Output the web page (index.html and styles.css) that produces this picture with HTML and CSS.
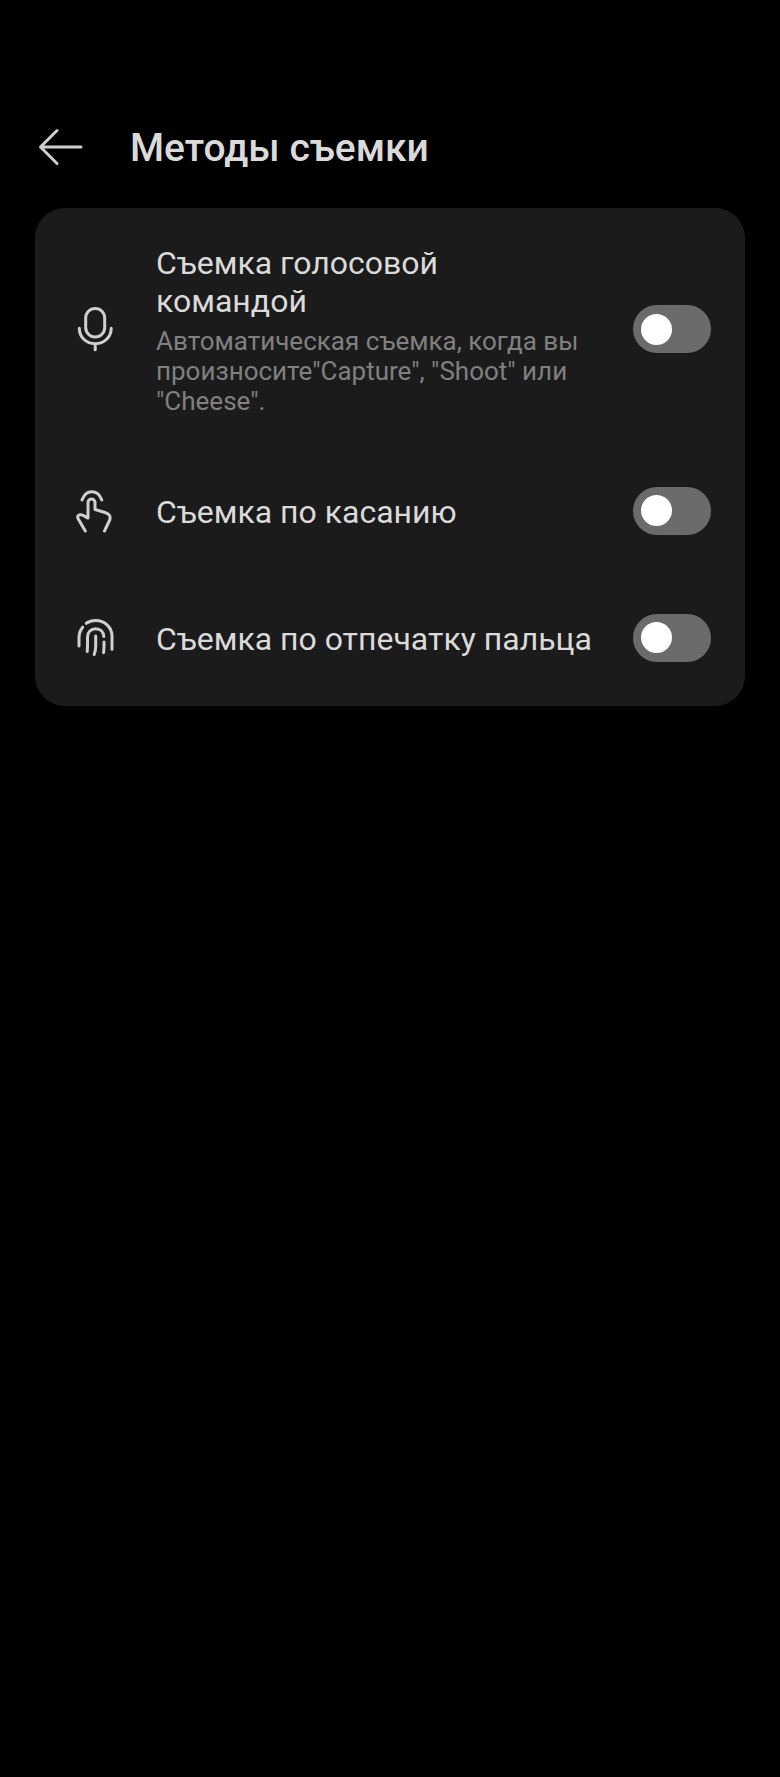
FILE: index.html
```
<!DOCTYPE html>
<html lang="ru">
<head>
    <meta charset="UTF-8">
    <meta name="viewport" content="width=device-width, initial-scale=1.0">
    <title>Методы съемки</title>
    <link rel="stylesheet" href="styles.css">
</head>
<body>
    <header class="header">
        <button type="button" class="back-btn" aria-label="Назад">
            <svg class="back-icon" viewBox="0 0 48 48" aria-hidden="true">
                <path d="M22 7.500L5.500 24l16.500 16.500M5.500 24H46"/>
            </svg>
        </button>
        <h1>Методы съемки</h1>
    </header>

    <main class="card">
        <div class="row">
            <svg class="row-icon" viewBox="0 0 40 48" aria-hidden="true">
                <rect x="9.700" y="3.500" width="19" height="28.500" rx="9.500"/>
                <path d="M3.300 23.200C3.300 32 10 38.700 19.200 38.700S35.200 32 35.200 23.200M19.200 38.700v6"/>
            </svg>
            <label class="row-text" for="voice">
                <span class="row-title">Съемка голосовой командой</span>
                <span class="row-desc">Автоматическая съемка, когда вы произносите"Capture", "Shoot" или "Cheese".</span>
            </label>
            <input type="checkbox" role="switch" class="switch" id="voice">
        </div>

        <div class="row">
            <svg class="row-icon" viewBox="0 0 40 48" aria-hidden="true">
                <path d="M6 13C8 7.500 11.500 4.700 15.800 4.700S23.800 7.500 25.800 13"/>
                <path d="M9.300 44L2.300 32C.700 29.300 2.500 27.300 5 27.800C8 28.300 9.500 30 12 31V15.500a3.500 3.500 0 0 1 7 0V22.500L29 25.500C33.500 27 35 29 33.700 33L28.500 44"/>
            </svg>
            <label class="row-text" for="touch">
                <span class="row-title">Съемка по касанию</span>
            </label>
            <input type="checkbox" role="switch" class="switch" id="touch">
        </div>

        <div class="row">
            <svg class="row-icon" viewBox="0 0 40 48" aria-hidden="true">
                <path d="M3 32V24C3 19.500 4.300 16 6.700 13.200"/>
                <path d="M10.300 9.300C13 7.300 16 6.500 19.500 6.500C29 6.500 36 13.500 36 22V35.300"/>
                <path d="M11.200 37.500C11.800 32 11.500 28 11.500 23C11.500 18 15 14.700 19.700 14.700S27.500 18 27.800 22.500"/>
                <path d="M28 28C28.200 32 28 35 27.600 38.700"/>
                <path d="M19.700 22V32C19.700 35 19.200 38 18.200 40.500"/>
            </svg>
            <label class="row-text" for="fingerprint">
                <span class="row-title">Съемка по отпечатку пальца</span>
            </label>
            <input type="checkbox" role="switch" class="switch" id="fingerprint">
        </div>
    </main>
</body>
</html>
```
FILE: styles.css
```
* {
    box-sizing: border-box;
    margin: 0;
    padding: 0;
}

body {
    font-family: Roboto, "Noto Sans", sans-serif;
    background: #000;
    color: #dadada;
    min-height: 100vh;
    padding: 123px 35px 35px;
}

.header {
    display: flex;
    align-items: center;
    gap: 47px;
    margin-bottom: 37px;
}

.header h1 {
    padding-top: 2px;
    font-size: 39px;
    font-weight: 500;
    line-height: 46px;
}

.back-btn {
    width: 48px;
    height: 48px;
    background: none;
    border: none;
    cursor: pointer;
}

.back-icon,
.row-icon {
    display: block;
    flex-shrink: 0;
    fill: none;
    stroke: #cfcfcf;
    stroke-width: 3;
    stroke-linecap: round;
    stroke-linejoin: round;
}

.back-icon {
    width: 48px;
    height: 48px;
}

.row-icon {
    width: 40px;
    height: 48px;
}

.card {
    background: #1b1b1b;
    border-radius: 30px;
    padding: 3px 0 5px;
}

.row {
    display: flex;
    align-items: center;
    min-height: 127px;
    padding: 31px 34px 31px 41px;
}

.row-text {
    flex: 1;
    margin: 0 38px 0 40px;
    padding-top: 2px;
    cursor: pointer;
}

.row-title {
    display: block;
    font-size: 32px;
    line-height: 38px;
}

.row-desc {
    display: block;
    margin-top: 6px;
    font-size: 26px;
    line-height: 30px;
    color: #808080;
}

.switch {
    appearance: none;
    display: flex;
    align-items: center;
    flex-shrink: 0;
    width: 78px;
    height: 48px;
    padding: 0 8px;
    border-radius: 24px;
    background: #6b6b6b;
    cursor: pointer;
}

.switch::before {
    content: "";
    width: 31px;
    height: 31px;
    border-radius: 50%;
    background: #fff;
}

.switch:checked {
    justify-content: flex-end;
    background: #2f7cf6;
}
```
